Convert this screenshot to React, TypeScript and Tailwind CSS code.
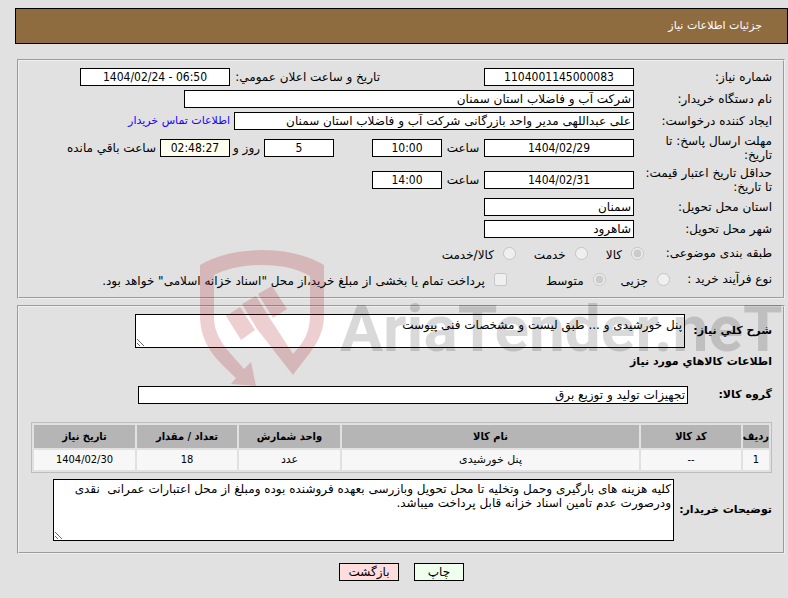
import type { InputHTMLAttributes, ReactNode } from "react";
import clsx from "clsx";

interface Item {
  row: string;
  code: string;
  name: string;
  unit: string;
  quantity: string;
  date: string;
}

const items: Item[] = [
  { row: "1", code: "--", name: "پنل خورشیدی", unit: "عدد", quantity: "18", date: "1404/02/30" },
];

// Numbers are set a little narrower than the running text
const numeric = "text-center font-['DejaVu_Sans_Condensed','DejaVu_Sans',sans-serif]";

const columns: { key: keyof Item; title: string; width: string; text?: boolean }[] = [
  { key: "row", title: "ردیف", width: "w-[26px]" },
  { key: "code", title: "کد کالا", width: "w-[100px]" },
  { key: "name", title: "نام کالا", width: "", text: true },
  { key: "unit", title: "واحد شمارش", width: "w-[101px]", text: true },
  { key: "quantity", title: "تعداد / مقدار", width: "w-[100px]" },
  { key: "date", title: "تاریخ نیاز", width: "w-[101px]" },
];

const Field = ({ className, ...props }: InputHTMLAttributes<HTMLInputElement>) => (
  <input
    type="text"
    readOnly
    className={clsx("h-[18px] min-w-0 border border-black px-0.5 leading-4", className)}
    {...props}
  />
);

const Row = ({ className, children }: { className: string; children: ReactNode }) => (
  <div className={clsx("flex items-center", className)}>{children}</div>
);

const FieldLabel = ({ htmlFor, children }: { htmlFor: string; children: ReactNode }) => (
  <label htmlFor={htmlFor} className="w-[138px] shrink-0 leading-[14px]">
    {children}
  </label>
);

interface ChoiceProps {
  type: "radio" | "checkbox";
  name: string;
  label: string;
  checked?: boolean;
}

const Choice = ({ type, name, label, checked = false }: ChoiceProps) => (
  <label className="flex items-center gap-[9px] whitespace-nowrap">
    <input type={type} name={name} checked={checked} disabled readOnly className="size-[13px]" />
    <span className="pt-1">{label}</span>
  </label>
);

const Watermark = () => (
  <svg
    className="pointer-events-none absolute left-[200px] top-[249px] h-[140px] w-[588px]"
    viewBox="200 249 588 140"
    aria-hidden="true"
  >
    <g fill="#a80f19" fillOpacity="0.2">
      <path d="M200 265Q226 250 263 250Q298 250 324 265V315C324 340 309 353 293 375L257 329L242 304L256 296L271 320L293 354C304 342 310 333 310 314V276Q291 265 262 265Q234 265 214 275V317C214 340 231 353 244 369L251 362L256 386L231 384L236 378C216 359 200 345 200 315Z" />
      <path d="M226 316L240 307L255 330L241 340Z" />
      <path d="M258 294L272 286L287 309L273 318Z" />
    </g>
    <text
      x="340"
      y="351"
      direction="ltr"
      fillOpacity="0.15"
      className="font-['Roboto',sans-serif] text-[64px] font-bold"
    >
      AriaTender.neT
    </text>
  </svg>
);

const App = () => {
  return (
    <div
      dir="rtl"
      className="relative min-h-screen bg-[#e1e1e1] pb-4 pl-[15px] pt-2 font-['DejaVu_Sans',sans-serif] text-[12px] leading-4 text-black"
    >
      <header className="flex h-9 items-center border border-black bg-[#8f6c40] px-[25px] text-[11px] text-white">
        <h1>جزئیات اطلاعات نیاز</h1>
      </header>

      <main className="ml-0.5 mr-[3px] mt-[15px]">
        <fieldset className="border-2 border-[#f0f0f0] py-[5px] pl-3 pr-[11px] [border-style:groove]">
          <Row className="h-[22px]">
            <FieldLabel htmlFor="number">شماره نیاز:</FieldLabel>
            <Field id="number" className={clsx("w-[150px] bg-white", numeric)} defaultValue="1104001145000083" />
            <label htmlFor="announced" className="mr-[104px] w-[150px] whitespace-nowrap">
              تاريخ و ساعت اعلان عمومي:
            </label>
            <Field
              id="announced"
              dir="ltr"
              className={clsx("w-[150px] bg-white", numeric)}
              defaultValue="1404/02/24 - 06:50"
            />
          </Row>
          <Row className="h-[22px]">
            <FieldLabel htmlFor="buyer">نام دستگاه خریدار:</FieldLabel>
            <Field id="buyer" className="w-[450px] bg-white" defaultValue="شرکت آب و فاضلاب استان سمنان" />
          </Row>
          <Row className="h-[22px]">
            <FieldLabel htmlFor="creator">ایجاد کننده درخواست:</FieldLabel>
            <Field
              id="creator"
              className="w-[400px] bg-white"
              defaultValue="علی عبداللهی مدیر واحد بازرگانی شرکت آب و فاضلاب استان سمنان"
            />
            <a href="#contact" className="mr-1 text-[11px] text-[#1a00ff]">
              اطلاعات تماس خریدار
            </a>
          </Row>
          <Row className="h-8">
            <FieldLabel htmlFor="replyDate">
              مهلت ارسال پاسخ: تا
              <br />
              تاریخ:
            </FieldLabel>
            <Field id="replyDate" className={clsx("w-[150px] bg-white", numeric)} defaultValue="1404/02/29" />
            <label htmlFor="replyTime" className="w-[42px] text-center">
              ساعت
            </label>
            <Field id="replyTime" className={clsx("w-[70px] bg-white", numeric)} defaultValue="10:00" />
            <Field id="days" className={clsx("mr-[38px] w-[70px] bg-white", numeric)} defaultValue="5" />
            <label htmlFor="days" className="w-[34px] whitespace-nowrap pr-1">
              روز و
            </label>
            <Field id="remaining" className={clsx("w-[70px] bg-[#ffffee]", numeric)} defaultValue="02:48:27" />
            <label htmlFor="remaining" className="mr-1">
              ساعت باقي مانده
            </label>
          </Row>
          <Row className="h-8">
            <FieldLabel htmlFor="priceDate">
              حداقل تاریخ اعتبار قیمت:
              <br />
              تا تاریخ:
            </FieldLabel>
            <Field id="priceDate" className={clsx("w-[150px] bg-white", numeric)} defaultValue="1404/02/31" />
            <label htmlFor="priceTime" className="w-[42px] text-center">
              ساعت
            </label>
            <Field id="priceTime" className={clsx("w-[70px] bg-white", numeric)} defaultValue="14:00" />
          </Row>
          <Row className="h-[22px]">
            <FieldLabel htmlFor="province">استان محل تحویل:</FieldLabel>
            <Field id="province" className="w-[150px] bg-white" defaultValue="سمنان" />
          </Row>
          <Row className="h-[22px]">
            <FieldLabel htmlFor="city">شهر محل تحویل:</FieldLabel>
            <Field id="city" className="w-[150px] bg-white" defaultValue="شاهرود" />
          </Row>
          <Row className="h-[26px] gap-[18px]">
            <span className="w-[110px] shrink-0 whitespace-nowrap">طبقه بندی موضوعی:</span>
            <Choice type="radio" name="category" label="کالا" checked />
            <Choice type="radio" name="category" label="خدمت" />
            <Choice type="radio" name="category" label="کالا/خدمت" />
          </Row>
          <Row className="h-[26px] gap-[15px]">
            <span className="w-[87px] shrink-0 whitespace-nowrap">نوع فرآیند خرید :</span>
            <Choice type="radio" name="process" label="جزیی" />
            <Choice type="radio" name="process" label="متوسط" checked />
            <div className="mr-6">
              <Choice
                type="checkbox"
                name="treasury"
                label={'پرداخت تمام یا بخشی از مبلغ خرید،از محل "اسناد خزانه اسلامی" خواهد بود.'}
              />
            </div>
          </Row>
        </fieldset>

        <fieldset className="mt-1.5 border-2 border-[#f0f0f0] pb-[11px] pl-3 pr-[11px] pt-[7px] [border-style:groove]">
          <Row className="gap-1">
            <label htmlFor="summary" className="w-[83px] shrink-0 whitespace-nowrap text-[11px] font-bold">
              شرح کلي نياز:
            </label>
            <textarea
              id="summary"
              readOnly
              className="block h-[34px] w-[550px] resize border border-black bg-white px-0.5 pt-0.5"
              defaultValue="پنل خورشیدی و ... طبق لیست و مشخصات فنی پیوست"
            />
          </Row>
          <h2 className="mt-1.5 text-[11px] font-bold">اطلاعات کالاهاي مورد نياز</h2>
          <Row className="mt-4">
            <label htmlFor="group" className="w-[84px] shrink-0 text-[11px] font-bold">
              گروه کالا:
            </label>
            <Field id="group" className="w-[550px] bg-white" defaultValue="تجهیزات تولید و توزیع برق" />
          </Row>

          <table className="mt-[18px] w-full table-fixed border-separate border-spacing-[2px] border border-[#bdbdbd] text-[11px]">
            <thead>
              <tr>
                {columns.map((col) => (
                  <th
                    key={col.key}
                    className={clsx("h-[23px] whitespace-nowrap bg-[#b5b5b5] p-0 font-bold", numeric, col.width)}
                  >
                    {col.title}
                  </th>
                ))}
              </tr>
            </thead>
            <tbody>
              {items.map((item) => (
                <tr key={item.row}>
                  {columns.map((col) => (
                    <td key={col.key} className={clsx("h-5 bg-[#f7f7f7] p-0", col.text ? "text-center" : numeric)}>
                      {item[col.key]}
                    </td>
                  ))}
                </tr>
              ))}
            </tbody>
          </table>

          <Row className="mt-1.5 gap-1">
            <label htmlFor="notes" className="w-[94px] shrink-0 whitespace-nowrap text-[11px] font-bold">
              توضیحات خریدار:
            </label>
            <textarea
              id="notes"
              readOnly
              className="block h-[62px] w-[621px] resize border border-black bg-white px-0.5 pt-0.5 leading-[14px]"
              defaultValue={
                "کلیه هزینه های بارگیری وحمل وتخلیه تا محل تحویل وبازرسی بعهده فروشنده بوده ومبلغ از محل اعتبارات عمرانی  نقدی\nودرصورت عدم تامین اسناد خزانه قابل پرداخت میباشد."
              }
            />
          </Row>
        </fieldset>
      </main>

      <div className="mt-[9px] flex justify-center gap-[15px]">
        <button type="button" className="h-[18px] w-[50px] border border-black bg-[#eeffee] leading-4">
          چاپ
        </button>
        <button type="button" className="h-[18px] w-[60px] border border-black bg-[#ffdddd] leading-4">
          بازگشت
        </button>
      </div>

      <Watermark />
    </div>
  );
};

export default App;
